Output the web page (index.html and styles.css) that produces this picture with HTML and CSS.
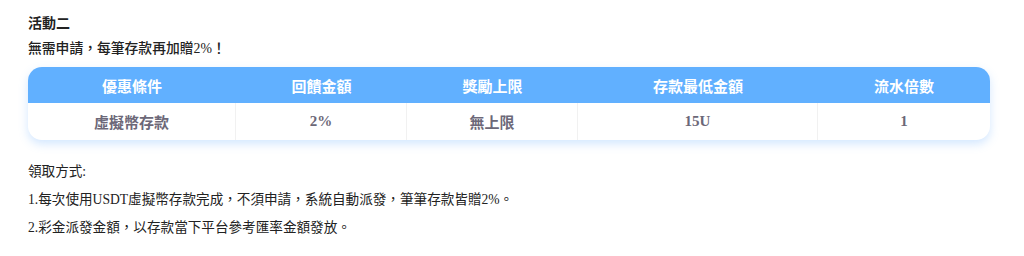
FILE: index.html
```html
<!DOCTYPE html>
<html lang="zh-Hant">
<head>
<meta charset="utf-8">
<link rel="stylesheet" href="styles.css">
</head>
<body>
<div class="page">
  <h3 class="title">活動二</h3>
  <p class="sub">無需申請，每筆存款再加贈2%！</p>
  <div class="tbl">
    <div class="row head">
      <div class="c c1">優惠條件</div>
      <div class="c c2">回饋金額</div>
      <div class="c c3">獎勵上限</div>
      <div class="c c4">存款最低金額</div>
      <div class="c c5">流水倍數</div>
    </div>
    <div class="row body">
      <div class="c c1">虛擬幣存款</div>
      <div class="c c2">2%</div>
      <div class="c c3">無上限</div>
      <div class="c c4">15U</div>
      <div class="c c5">1</div>
    </div>
  </div>
  <div class="notes">
    <p>領取方式:</p>
    <p>1.每次使用USDT虛擬幣存款完成，不須申請，系統自動派發，筆筆存款皆贈2%。</p>
    <p>2.彩金派發金額，以存款當下平台參考匯率金額發放。</p>
  </div>
</div>
</body>
</html>
```

FILE: styles.css
```css
html, body {
  margin: 0;
  padding: 0;
  background: #ffffff;
}
body {
  font-family: "Liberation Serif", "Noto Sans CJK TC", serif;
  color: #222;
}
.page {
  padding: 15px 34px 0 28px;
}
.title {
  margin: 0;
  font-size: 14px;
  line-height: 18px;
  font-weight: bold;
  color: #222;
}
.sub {
  margin: 7px 0 0;
  font-size: 13.8px;
  line-height: 18px;
  font-weight: 500;
  color: #222;
}
.tbl {
  margin-top: 9px;
  border-radius: 14px;
  overflow: hidden;
  background: #fff;
  box-shadow: 0 4px 10px rgba(96, 170, 255, 0.28);
}
.row {
  display: grid;
  grid-template-columns: 208px 171px 171px 240px 1fr;
}
.head {
  background: #61b0ff;
  height: 36px;
}
.head .c {
  color: #fff;
  font-weight: bold;
  font-size: 15px;
}
.body {
  height: 37px;
}
.body .c {
  color: #6c6878;
  font-weight: bold;
  font-size: 15px;
  border-right: 1px solid #f1f1f1;
}
.body .c5 { border-right: none; }
.c {
  display: flex;
  align-items: center;
  justify-content: center;
}
.notes {
  margin-top: 23px;
}
.notes p {
  margin: 0 0 10px;
  font-size: 13.6px;
  line-height: 18px;
  color: #222;
}
```
